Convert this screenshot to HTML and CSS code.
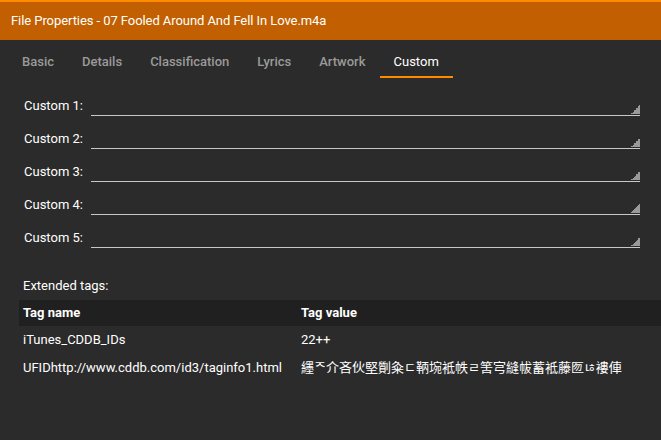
FILE: index.html
```html
<!DOCTYPE html>
<html lang="en">

<head>
    <meta charset="UTF-8">
    <meta name="viewport" content="width=device-width, initial-scale=1.0">
    <title>File Properties</title>
    <link rel="stylesheet" href="styles.css">
</head>

<body>
    <!-- 标题栏 -->
    <div class="titlebar">File Properties - 07 Fooled Around And Fell In Love.m4a</div>

    <!-- 选项卡 -->
    <div class="tabs">
        <a href="javascript:;">Basic</a>
        <a href="javascript:;">Details</a>
        <a href="javascript:;">Classification</a>
        <a href="javascript:;">Lyrics</a>
        <a href="javascript:;">Artwork</a>
        <a class="active" href="javascript:;">Custom</a>
    </div>

    <!-- 自定义字段 -->
    <div class="fields">
        <div class="row">
            <label>Custom 1:</label>
            <div class="field"></div>
        </div>
        <div class="row">
            <label>Custom 2:</label>
            <div class="field"></div>
        </div>
        <div class="row">
            <label>Custom 3:</label>
            <div class="field"></div>
        </div>
        <div class="row">
            <label>Custom 4:</label>
            <div class="field"></div>
        </div>
        <div class="row">
            <label>Custom 5:</label>
            <div class="field"></div>
        </div>
    </div>

    <!-- 扩展标签 -->
    <div class="ext-title">Extended tags:</div>
    <div class="ext-table">
        <div class="th">Tag name</div>
        <div class="th">Tag value</div>
        <div class="td">iTunes_CDDB_IDs</div>
        <div class="td">22++</div>
        <div class="td">UFIDhttp://www.cddb.com/id3/taginfo1.html</div>
        <div class="td cjk">纆ᅐ介吝伙堅劕粂ㄷ鞆埦袛帙ㄹ筈宆縫帗蓄袛藤匢ㄶ褸俥</div>
    </div>
</body>

</html>
```

FILE: styles.css
```css
body {
    margin: 0;
    background-color: #2b2b2b;
    font-family: Roboto, "Noto Sans", sans-serif;
    font-size: 13px;
    color: #fff;
}

.titlebar {
    height: 38px;
    line-height: 38px;
    padding-left: 11px;
    background-color: #c25f00;
    border-top: 2px solid #ff8a00;
    letter-spacing: -0.07px;
}

.tabs {
    display: flex;
    padding-left: 8px;
}

.tabs a {
    padding: 14px 14px 6px;
    line-height: 16px;
    color: #9a9a9a;
    font-weight: 500;
    text-decoration: none;
    border-bottom: 2px solid transparent;
}

.tabs .active {
    color: #fff;
    font-weight: 400;
    border-bottom-color: #ff8a00;
}

.fields {
    margin-top: 11px;
    padding-left: 24px;
}

.row {
    display: flex;
    align-items: center;
    height: 33px;
}

.row label {
    width: 67px;
    line-height: 16px;
}

.field {
    position: relative;
    width: 549px;
    height: 20px;
    border-bottom: 1px solid #c8c8c8;
}

/* 右下角拖拽三角 */
.field::after {
    content: "";
    position: absolute;
    right: 0;
    bottom: 1px;
    width: 9px;
    height: 9px;
    background: linear-gradient(to bottom right, transparent 50%, #999 50%);
}

.ext-title {
    margin: 24px 0 6px 23px;
    line-height: 16px;
}

.ext-table {
    display: grid;
    grid-template-columns: 278px 1fr;
    margin-left: 19px;
}

.th {
    background-color: #202020;
    font-weight: 700;
    line-height: 26px;
    padding-left: 4px;
}

.td {
    line-height: 28px;
    padding-left: 4px;
}

.cjk {
    font-family: Roboto, "Noto Sans CJK SC", sans-serif;
}
```
